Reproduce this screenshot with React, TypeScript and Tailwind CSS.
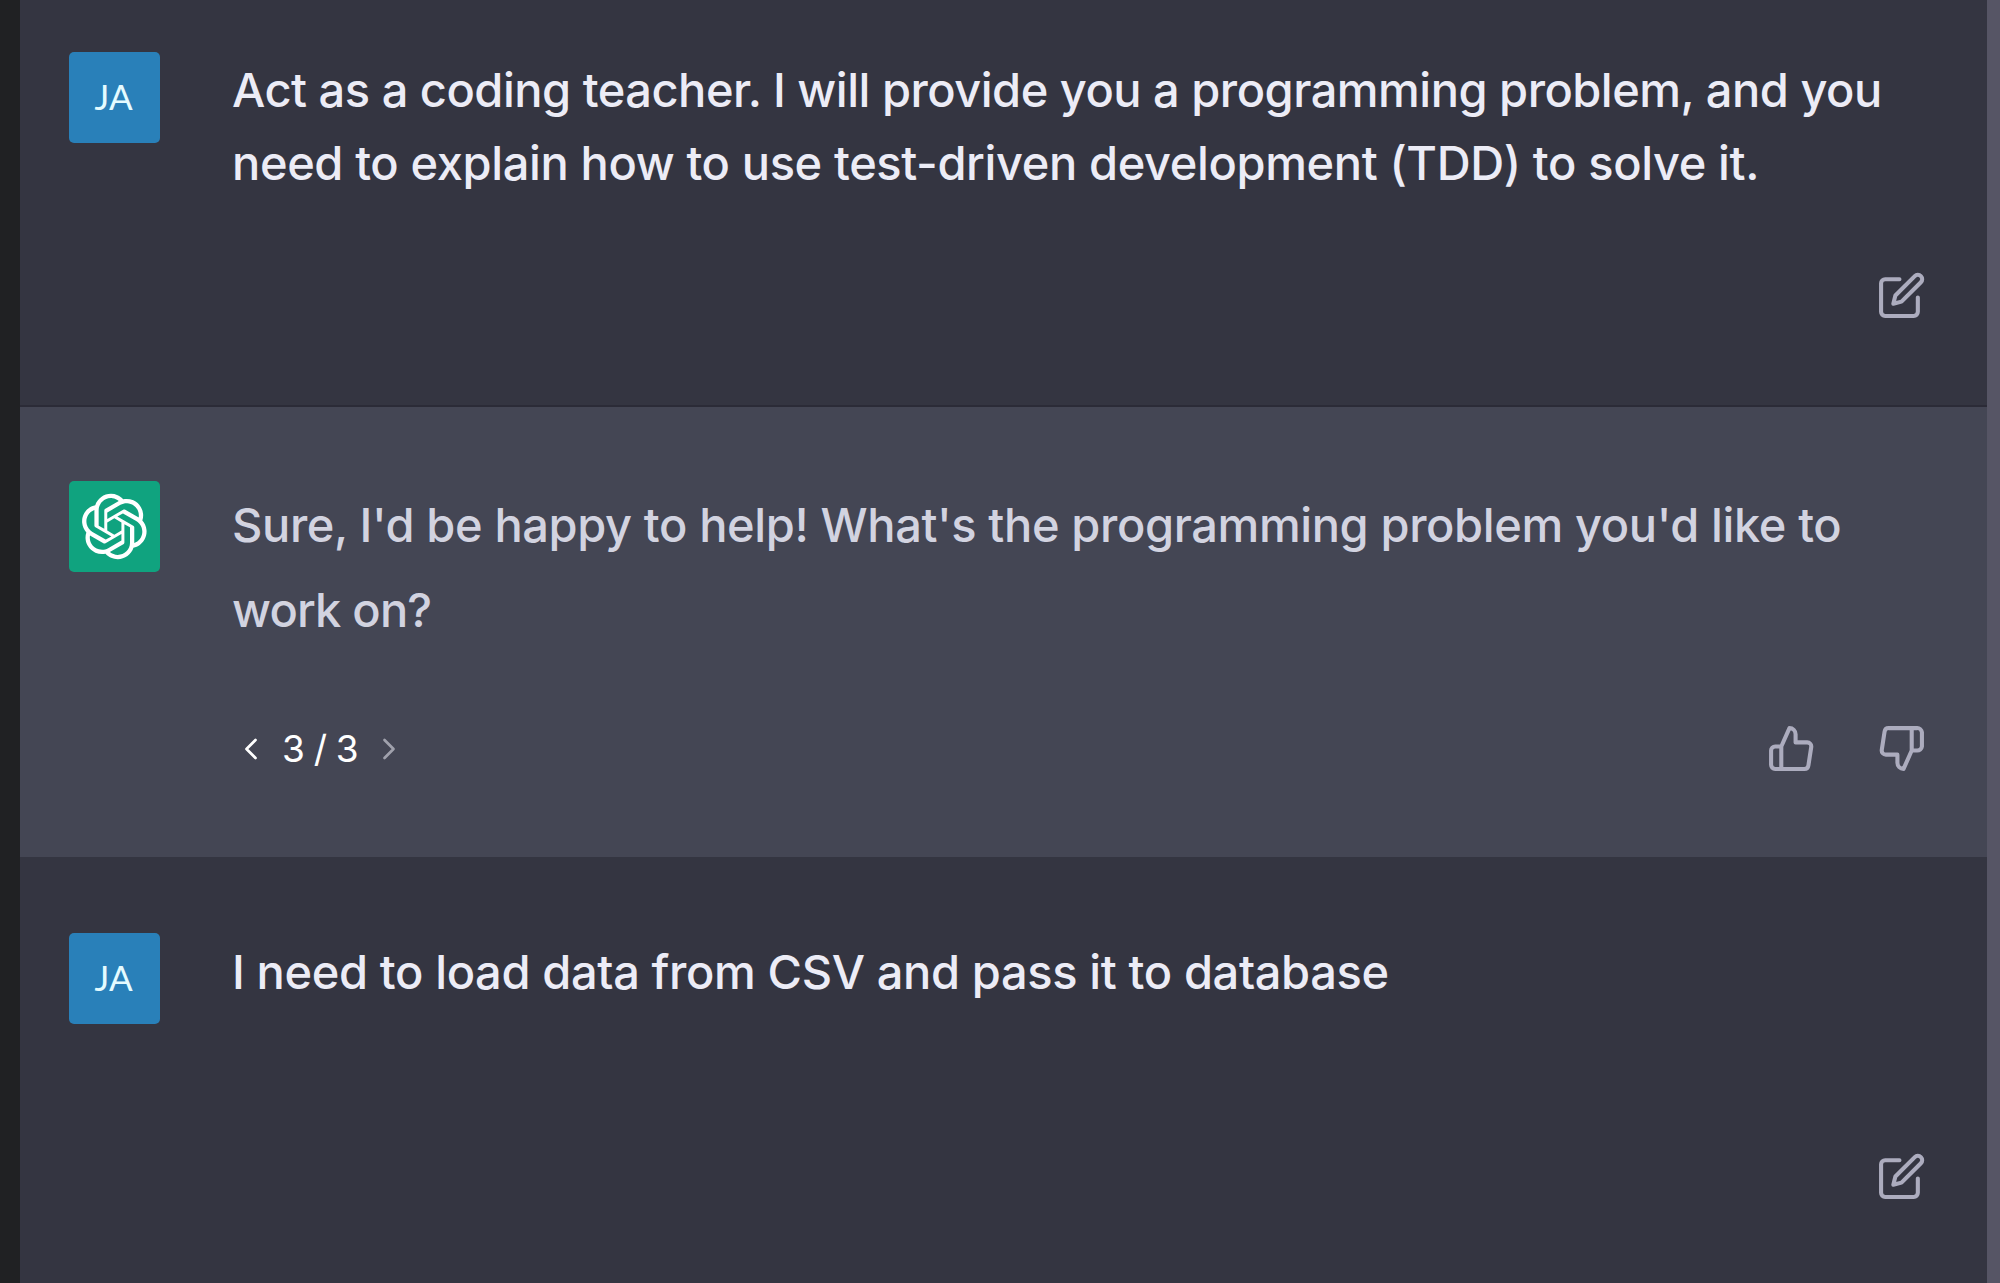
import { FiChevronLeft, FiChevronRight, FiEdit, FiThumbsDown, FiThumbsUp } from "react-icons/fi";

const LOGO_PATH =
  "M37.5324 16.8707C37.9808 15.5241 38.1363 14.0974 37.9886 12.6859C37.8409 11.2744 37.3934 9.91076 36.676 8.68622C35.6126 6.83404 33.9882 5.3676 32.0373 4.4985C30.0864 3.62941 27.9098 3.40259 25.8215 3.85078C24.8796 2.7893 23.7219 1.94125 22.4257 1.36341C21.1295 0.785575 19.7249 0.491269 18.3058 0.500197C16.1708 0.495044 14.0893 1.16803 12.3614 2.42214C10.6335 3.67624 9.34853 5.44666 8.6917 7.47815C7.30085 7.76286 5.98686 8.3414 4.8377 9.17505C3.68854 10.0087 2.73073 11.0782 2.02839 12.312C0.956464 14.1591 0.498905 16.2988 0.721698 18.4228C0.944492 20.5467 1.83612 22.5449 3.268 24.1293C2.81966 25.4759 2.66413 26.9026 2.81182 28.3141C2.95951 29.7256 3.40701 31.0892 4.12437 32.3138C5.18791 34.1659 6.8123 35.6322 8.76321 36.5013C10.7141 37.3704 12.8907 37.5973 14.9789 37.1492C15.9208 38.2107 17.0786 39.0587 18.3747 39.6366C19.6709 40.2144 21.0755 40.5087 22.4946 40.4998C24.6307 40.5054 26.7133 39.8321 28.4418 38.5772C30.1704 37.3223 31.4556 35.5506 32.1119 33.5179C33.5027 33.2332 34.8167 32.6547 35.9659 31.821C37.115 30.9874 38.0728 29.9178 38.7752 28.684C39.8458 26.8371 40.3023 24.6979 40.0789 22.5748C39.8556 20.4517 38.9639 18.4544 37.5324 16.8707ZM22.4978 37.8849C20.7443 37.8874 19.0459 37.2733 17.6994 36.1501C17.7601 36.117 17.8666 36.0586 17.936 36.0161L25.9004 31.4156C26.1003 31.3019 26.2663 31.137 26.3813 30.9378C26.4964 30.7386 26.5563 30.5124 26.5549 30.2825V19.0542L29.9213 20.998C29.9389 21.0068 29.9541 21.0198 29.9656 21.0359C29.977 21.052 29.9842 21.0707 29.9867 21.0902V30.3889C29.9842 32.375 29.1946 34.2791 27.7909 35.6841C26.3872 37.0892 24.4838 37.8806 22.4978 37.8849ZM6.39227 31.0064C5.51397 29.4888 5.19742 27.7107 5.49804 25.9832C5.55718 26.0187 5.66048 26.0818 5.73461 26.1244L13.699 30.7248C13.8975 30.8408 14.1233 30.902 14.3532 30.902C14.583 30.902 14.8088 30.8408 15.0073 30.7248L24.731 25.1103V28.9979C24.7321 29.0177 24.7283 29.0376 24.7199 29.0556C24.7115 29.0736 24.6988 29.0893 24.6829 29.1012L16.6317 33.7497C14.9096 34.7416 12.8643 35.0097 10.9447 34.4954C9.02506 33.9811 7.38785 32.7263 6.39227 31.0064ZM4.29707 13.6194C5.17156 12.0998 6.55279 10.9364 8.19885 10.3327C8.19885 10.4013 8.19491 10.5228 8.19491 10.6071V19.808C8.19351 20.0378 8.25334 20.2638 8.36823 20.4629C8.48312 20.6619 8.64893 20.8267 8.84863 20.9404L18.5723 26.5542L15.206 28.4979C15.1894 28.5089 15.1703 28.5155 15.1505 28.5173C15.1307 28.5191 15.1107 28.516 15.0924 28.5082L7.04046 23.8557C5.32135 22.8601 4.06716 21.2235 3.55289 19.3046C3.03862 17.3858 3.30624 15.3413 4.29707 13.6194ZM31.955 20.0556L22.2312 14.4411L25.5976 12.4981C25.6142 12.4872 25.6333 12.4805 25.6531 12.4787C25.6729 12.4769 25.6928 12.4801 25.7111 12.4879L33.7631 17.1364C34.9967 17.849 36.0017 18.8982 36.6606 20.1613C37.3194 21.4244 37.6047 22.849 37.4832 24.2684C37.3617 25.6878 36.8382 27.0432 35.9743 28.1759C35.1103 29.3086 33.9415 30.1717 32.6047 30.6641C32.6047 30.5947 32.6047 30.4733 32.6047 30.3889V21.188C32.6066 20.9586 32.5474 20.7328 32.4332 20.5338C32.319 20.3348 32.154 20.1698 31.955 20.0556ZM35.3055 15.0128C35.2464 14.9765 35.1431 14.9142 35.069 14.8717L27.1045 10.2712C26.906 10.1554 26.6803 10.0943 26.4504 10.0943C26.2206 10.0943 25.9948 10.1554 25.7963 10.2712L16.0726 15.8858V11.9982C16.0715 11.9783 16.0753 11.9585 16.0837 11.9405C16.0921 11.9225 16.1048 11.9068 16.1207 11.8949L24.1719 7.25025C25.4053 6.53903 26.8158 6.19376 28.2383 6.25482C29.6608 6.31589 31.0364 6.78077 32.2044 7.59508C33.3723 8.40939 34.2842 9.53945 34.8334 10.8531C35.3826 12.1667 35.5464 13.6095 35.3055 15.0128ZM14.2424 21.9419L10.8752 19.9981C10.8576 19.9893 10.8423 19.9763 10.8309 19.9602C10.8195 19.9441 10.8122 19.9254 10.8098 19.9058V10.6071C10.8107 9.18295 11.2173 7.78848 11.9819 6.58696C12.7466 5.38544 13.8377 4.42659 15.1275 3.82264C16.4173 3.21869 17.8524 2.99464 19.2649 3.1767C20.6775 3.35876 22.0089 3.93941 23.1034 4.85067C23.0427 4.88379 22.937 4.94215 22.8668 4.98473L14.9024 9.58517C14.7025 9.69878 14.5366 9.86356 14.4215 10.0626C14.3065 10.2616 14.2466 10.4877 14.2479 10.7175L14.2424 21.9419ZM16.071 17.9991L20.4018 15.4978L24.7325 17.9975V22.9985L20.4018 25.4983L16.071 22.9985V17.9991Z";

function UserAvatar() {
  return (
    <div className="flex size-[91px] shrink-0 items-center justify-center rounded-[5px] bg-[#2980b9] pr-0.5 pb-0.5 font-['Lato',sans-serif] text-[35px] leading-none font-normal text-[#e4fbff]">
      JA
    </div>
  );
}

function AssistantAvatar() {
  return (
    <div className="flex size-[91px] shrink-0 items-center justify-center rounded-[5px] bg-[#10a37f] text-white">
      <svg viewBox="0 0 41 41" className="size-[67px]" fill="currentColor">
        <path d={LOGO_PATH} />
      </svg>
    </div>
  );
}

function EditButton() {
  return (
    <button aria-label="Edit" className="mr-[61px] self-end text-[#acacbe]">
      <FiEdit className="block size-[49px]" />
    </button>
  );
}

export default function App() {
  return (
    <div className="flex h-[1283px] w-[2000px] overflow-hidden bg-[#343541] font-['Inter',sans-serif] text-[47px] font-[450]">
      <aside className="w-5 shrink-0 bg-[#202123]" />
      <main className="flex w-[1967px] shrink-0 flex-col">
        <section className="flex h-[407px] shrink-0 border-b-2 border-[#2b2b37] bg-[#343541] pl-[49px] pt-[52px]">
          <UserAvatar />
          <div className="ml-[72px] flex flex-1 flex-col">
            <p className="pt-px leading-[73px] whitespace-nowrap text-[#ececf6]">
              <span className="tracking-[-0.5px]">
                Act as a coding teacher. I will provide you a programming problem, and you
              </span>
              <br />
              <span className="tracking-[-0.375px]">
                need to explain how to use test-driven development (TDD) to solve it.
              </span>
            </p>
            <div className="mt-[72px] flex flex-col">
              <EditButton />
            </div>
          </div>
        </section>

        <section className="flex h-[450px] shrink-0 bg-[#444654] pl-[49px] pt-[74px]">
          <AssistantAvatar />
          <div className="ml-[72px] flex flex-1 flex-col">
            <p className="pt-px leading-[85px] whitespace-nowrap text-[#d2d3e0]">
              <span className="tracking-[-0.38px]">
                Sure, I'd be happy to help! What's the programming problem you'd like to
              </span>
              <br />
              <span className="tracking-[-0.8px]">work on?</span>
            </p>
            <div className="mt-[72px] flex items-center justify-between pr-[61px]">
              <div className="ml-px flex items-center text-[37px] leading-[49px] font-normal text-white">
                <FiChevronLeft className="size-9" strokeWidth={1.8} />
                <span className="mx-3 w-[78px] text-center tracking-[-0.8px] whitespace-nowrap">3 / 3</span>
                <FiChevronRight className="size-9 text-[#a0a1ac]" strokeWidth={1.8} />
              </div>
              <div className="flex gap-[61px] text-[#acacbe]">
                <FiThumbsUp className="size-[49px]" />
                <FiThumbsDown className="size-[49px]" />
              </div>
            </div>
          </div>
        </section>

        <section className="flex flex-1 bg-[#343541] pl-[49px] pt-[76px]">
          <UserAvatar />
          <div className="ml-[72px] flex flex-1 flex-col">
            <p className="pt-0.5 leading-[73px] tracking-[-0.37px] whitespace-nowrap text-[#ececf6]">
              I need to load data from CSV and pass it to database
            </p>
            <div className="mt-[144px] flex flex-col">
              <EditButton />
            </div>
          </div>
        </section>
      </main>
      <div className="flex-1 bg-[#565565]" />
    </div>
  );
}
